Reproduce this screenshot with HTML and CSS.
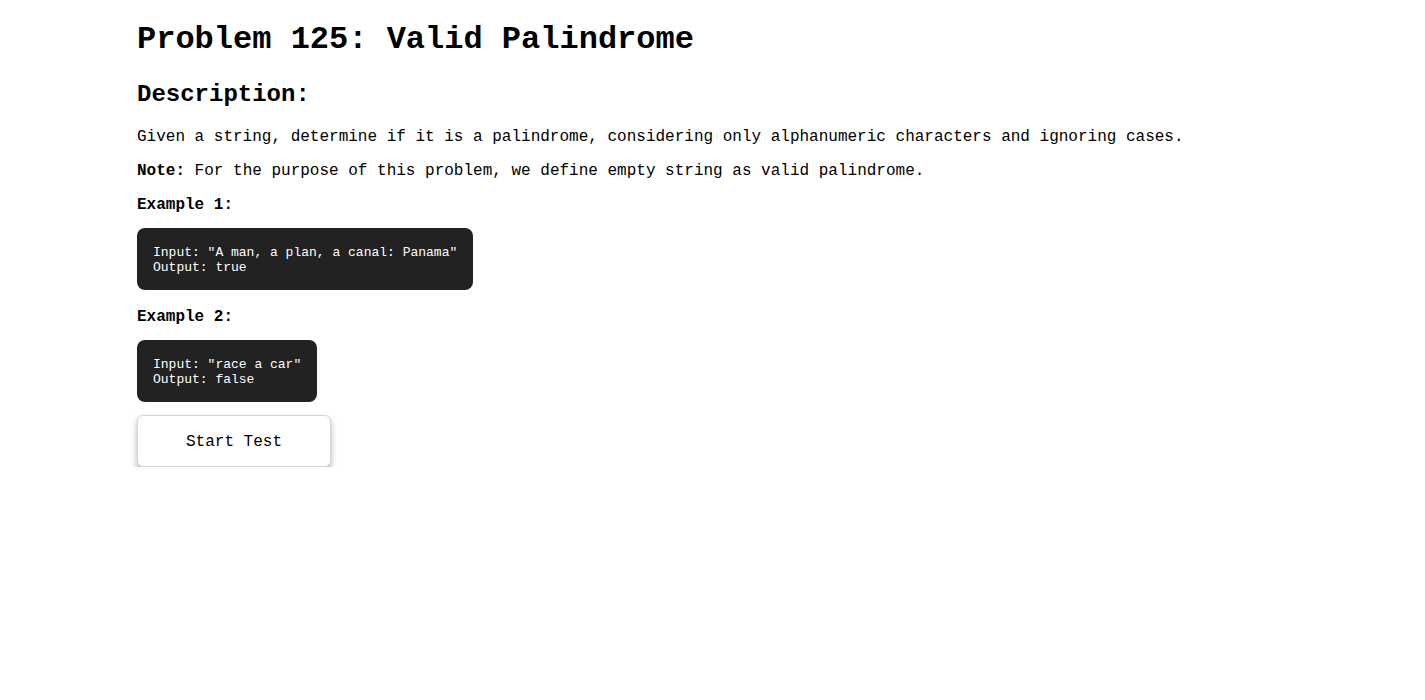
FILE: index.html
```html
<!DOCTYPE html>
<html lang="en">
<head>
<meta charset="utf-8">
<title>Problem 125: Valid Palindrome</title>
<link rel="stylesheet" href="styles.css">
</head>
<body>
<main class="container">
  <h1 class="title">Problem 125: Valid Palindrome</h1>
  <h2 class="section-title">Description:</h2>
  <p class="text">Given a string, determine if it is a palindrome, considering only alphanumeric characters and ignoring cases.</p>
  <p class="text"><strong>Note:</strong> For the purpose of this problem, we define empty string as valid palindrome.</p>
  <p class="text label"><strong>Example 1:</strong></p>
  <pre class="code">Input: "A man, a plan, a canal: Panama"
Output: true</pre>
  <p class="text label"><strong>Example 2:</strong></p>
  <pre class="code">Input: "race a car"
Output: false</pre>
  <button class="start-btn" type="button">Start Test</button>
</main>
</body>
</html>
```
FILE: styles.css
```css
html, body {
  margin: 0;
  padding: 0;
  background: #ffffff;
}
body {
  font-family: "Liberation Mono", "Courier New", monospace;
  color: #000000;
  font-size: 16px;
}
.container {
  max-width: 1151px;
  margin: 0 auto;
  padding-top: 1px;
}
.title {
  font-size: 32px;
  font-weight: bold;
  margin: 20px 0 23px;
}
.section-title {
  font-size: 24px;
  font-weight: bold;
  margin: 20px 0 20px;
}
.text {
  margin: 16px 0;
}
.label {
  margin-bottom: 14px;
}
.code {
  display: inline-block;
  background: #222222;
  color: #ffffff;
  font-family: "Liberation Mono", "Courier New", monospace;
  font-size: 13px;
  line-height: 15px;
  padding: 17px 16px 15px;
  border-radius: 8px;
  margin: 0 0 2px;
}
.start-btn {
  display: block;
  margin-top: 11px;
  font-family: "Liberation Mono", "Courier New", monospace;
  font-size: 16px;
  color: #000000;
  background: #ffffff;
  border: 1px solid #d6d6d6;
  border-radius: 6px;
  padding: 17px 48px 15px;
  box-shadow: 0 4px 6px rgba(0, 0, 0, 0.3);
  cursor: pointer;
}
```
